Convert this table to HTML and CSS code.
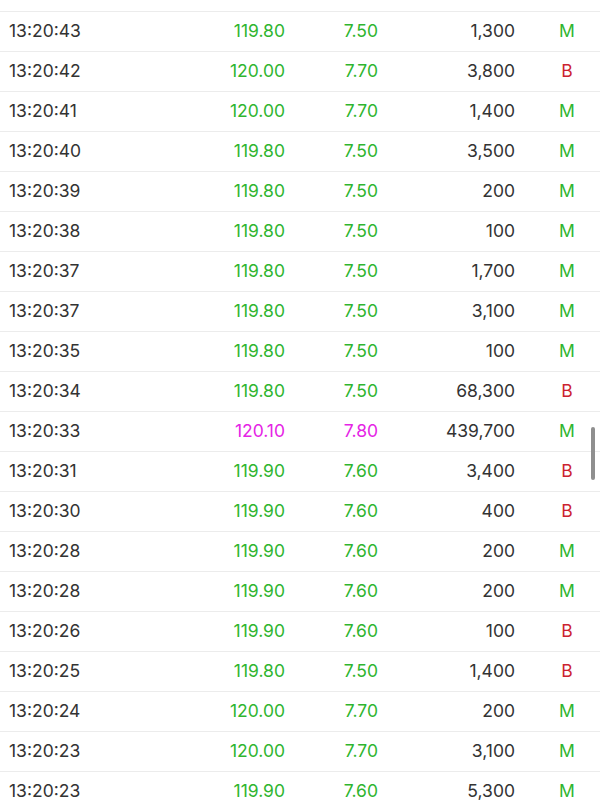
FILE: index.html
```html
<!DOCTYPE html>
<html>
<head>
<meta charset="utf-8">
<link rel="stylesheet" href="styles.css">
</head>
<body>
<div class="list">
  <div class="row"><span class="t"></span><span class="p up"></span><span class="c up"></span><span class="v">2,000</span><span class="f m"></span></div>
  <div class="row"><span class="t">13:20:43</span><span class="p up">119.80</span><span class="c up">7.50</span><span class="v">1,300</span><span class="f m">M</span></div>
  <div class="row"><span class="t">13:20:42</span><span class="p up">120.00</span><span class="c up">7.70</span><span class="v">3,800</span><span class="f b">B</span></div>
  <div class="row"><span class="t">13:20:41</span><span class="p up">120.00</span><span class="c up">7.70</span><span class="v">1,400</span><span class="f m">M</span></div>
  <div class="row"><span class="t">13:20:40</span><span class="p up">119.80</span><span class="c up">7.50</span><span class="v">3,500</span><span class="f m">M</span></div>
  <div class="row"><span class="t">13:20:39</span><span class="p up">119.80</span><span class="c up">7.50</span><span class="v">200</span><span class="f m">M</span></div>
  <div class="row"><span class="t">13:20:38</span><span class="p up">119.80</span><span class="c up">7.50</span><span class="v">100</span><span class="f m">M</span></div>
  <div class="row"><span class="t">13:20:37</span><span class="p up">119.80</span><span class="c up">7.50</span><span class="v">1,700</span><span class="f m">M</span></div>
  <div class="row"><span class="t">13:20:37</span><span class="p up">119.80</span><span class="c up">7.50</span><span class="v">3,100</span><span class="f m">M</span></div>
  <div class="row"><span class="t">13:20:35</span><span class="p up">119.80</span><span class="c up">7.50</span><span class="v">100</span><span class="f m">M</span></div>
  <div class="row"><span class="t">13:20:34</span><span class="p up">119.80</span><span class="c up">7.50</span><span class="v">68,300</span><span class="f b">B</span></div>
  <div class="row"><span class="t">13:20:33</span><span class="p ceil">120.10</span><span class="c ceil">7.80</span><span class="v">439,700</span><span class="f m">M</span></div>
  <div class="row"><span class="t">13:20:31</span><span class="p up">119.90</span><span class="c up">7.60</span><span class="v">3,400</span><span class="f b">B</span></div>
  <div class="row"><span class="t">13:20:30</span><span class="p up">119.90</span><span class="c up">7.60</span><span class="v">400</span><span class="f b">B</span></div>
  <div class="row"><span class="t">13:20:28</span><span class="p up">119.90</span><span class="c up">7.60</span><span class="v">200</span><span class="f m">M</span></div>
  <div class="row"><span class="t">13:20:28</span><span class="p up">119.90</span><span class="c up">7.60</span><span class="v">200</span><span class="f m">M</span></div>
  <div class="row"><span class="t">13:20:26</span><span class="p up">119.90</span><span class="c up">7.60</span><span class="v">100</span><span class="f b">B</span></div>
  <div class="row"><span class="t">13:20:25</span><span class="p up">119.80</span><span class="c up">7.50</span><span class="v">1,400</span><span class="f b">B</span></div>
  <div class="row"><span class="t">13:20:24</span><span class="p up">120.00</span><span class="c up">7.70</span><span class="v">200</span><span class="f m">M</span></div>
  <div class="row"><span class="t">13:20:23</span><span class="p up">120.00</span><span class="c up">7.70</span><span class="v">3,100</span><span class="f m">M</span></div>
  <div class="row"><span class="t">13:20:23</span><span class="p up">119.90</span><span class="c up">7.60</span><span class="v">5,300</span><span class="f m">M</span></div>
</div>
<div class="scrollbar"></div>
</body>
</html>
```
FILE: styles.css
```css
html, body {
  margin: 0;
  padding: 0;
  background: #ffffff;
  overflow: hidden;
  height: 800px;
}
body {
  font-family: Inter, "Noto Sans", sans-serif;
  font-size: 17.5px;
  color: #333333;
  position: relative;
}
.list {
  margin-top: -28px;
}
.row {
  box-sizing: border-box;
  display: grid;
  grid-template-columns: 150px 126px 93px 137px 85px;
  padding-left: 9px;
  padding-bottom: 1px;
  height: 40px;
  align-items: center;
  border-bottom: 1px solid #ececec;
  line-height: 1;
}
.t { text-align: left; }
.p, .c, .v { text-align: right; }
.f { text-align: center; padding-left: 19px; }
.up { color: #2fb52f; }
.ceil { color: #e524e5; }
.m { color: #2fb52f; }
.b { color: #cc2230; }
.scrollbar {
  position: absolute;
  left: 591px;
  top: 427px;
  width: 4px;
  height: 53px;
  border-radius: 2px;
  background: #8f8f8f;
}
```
